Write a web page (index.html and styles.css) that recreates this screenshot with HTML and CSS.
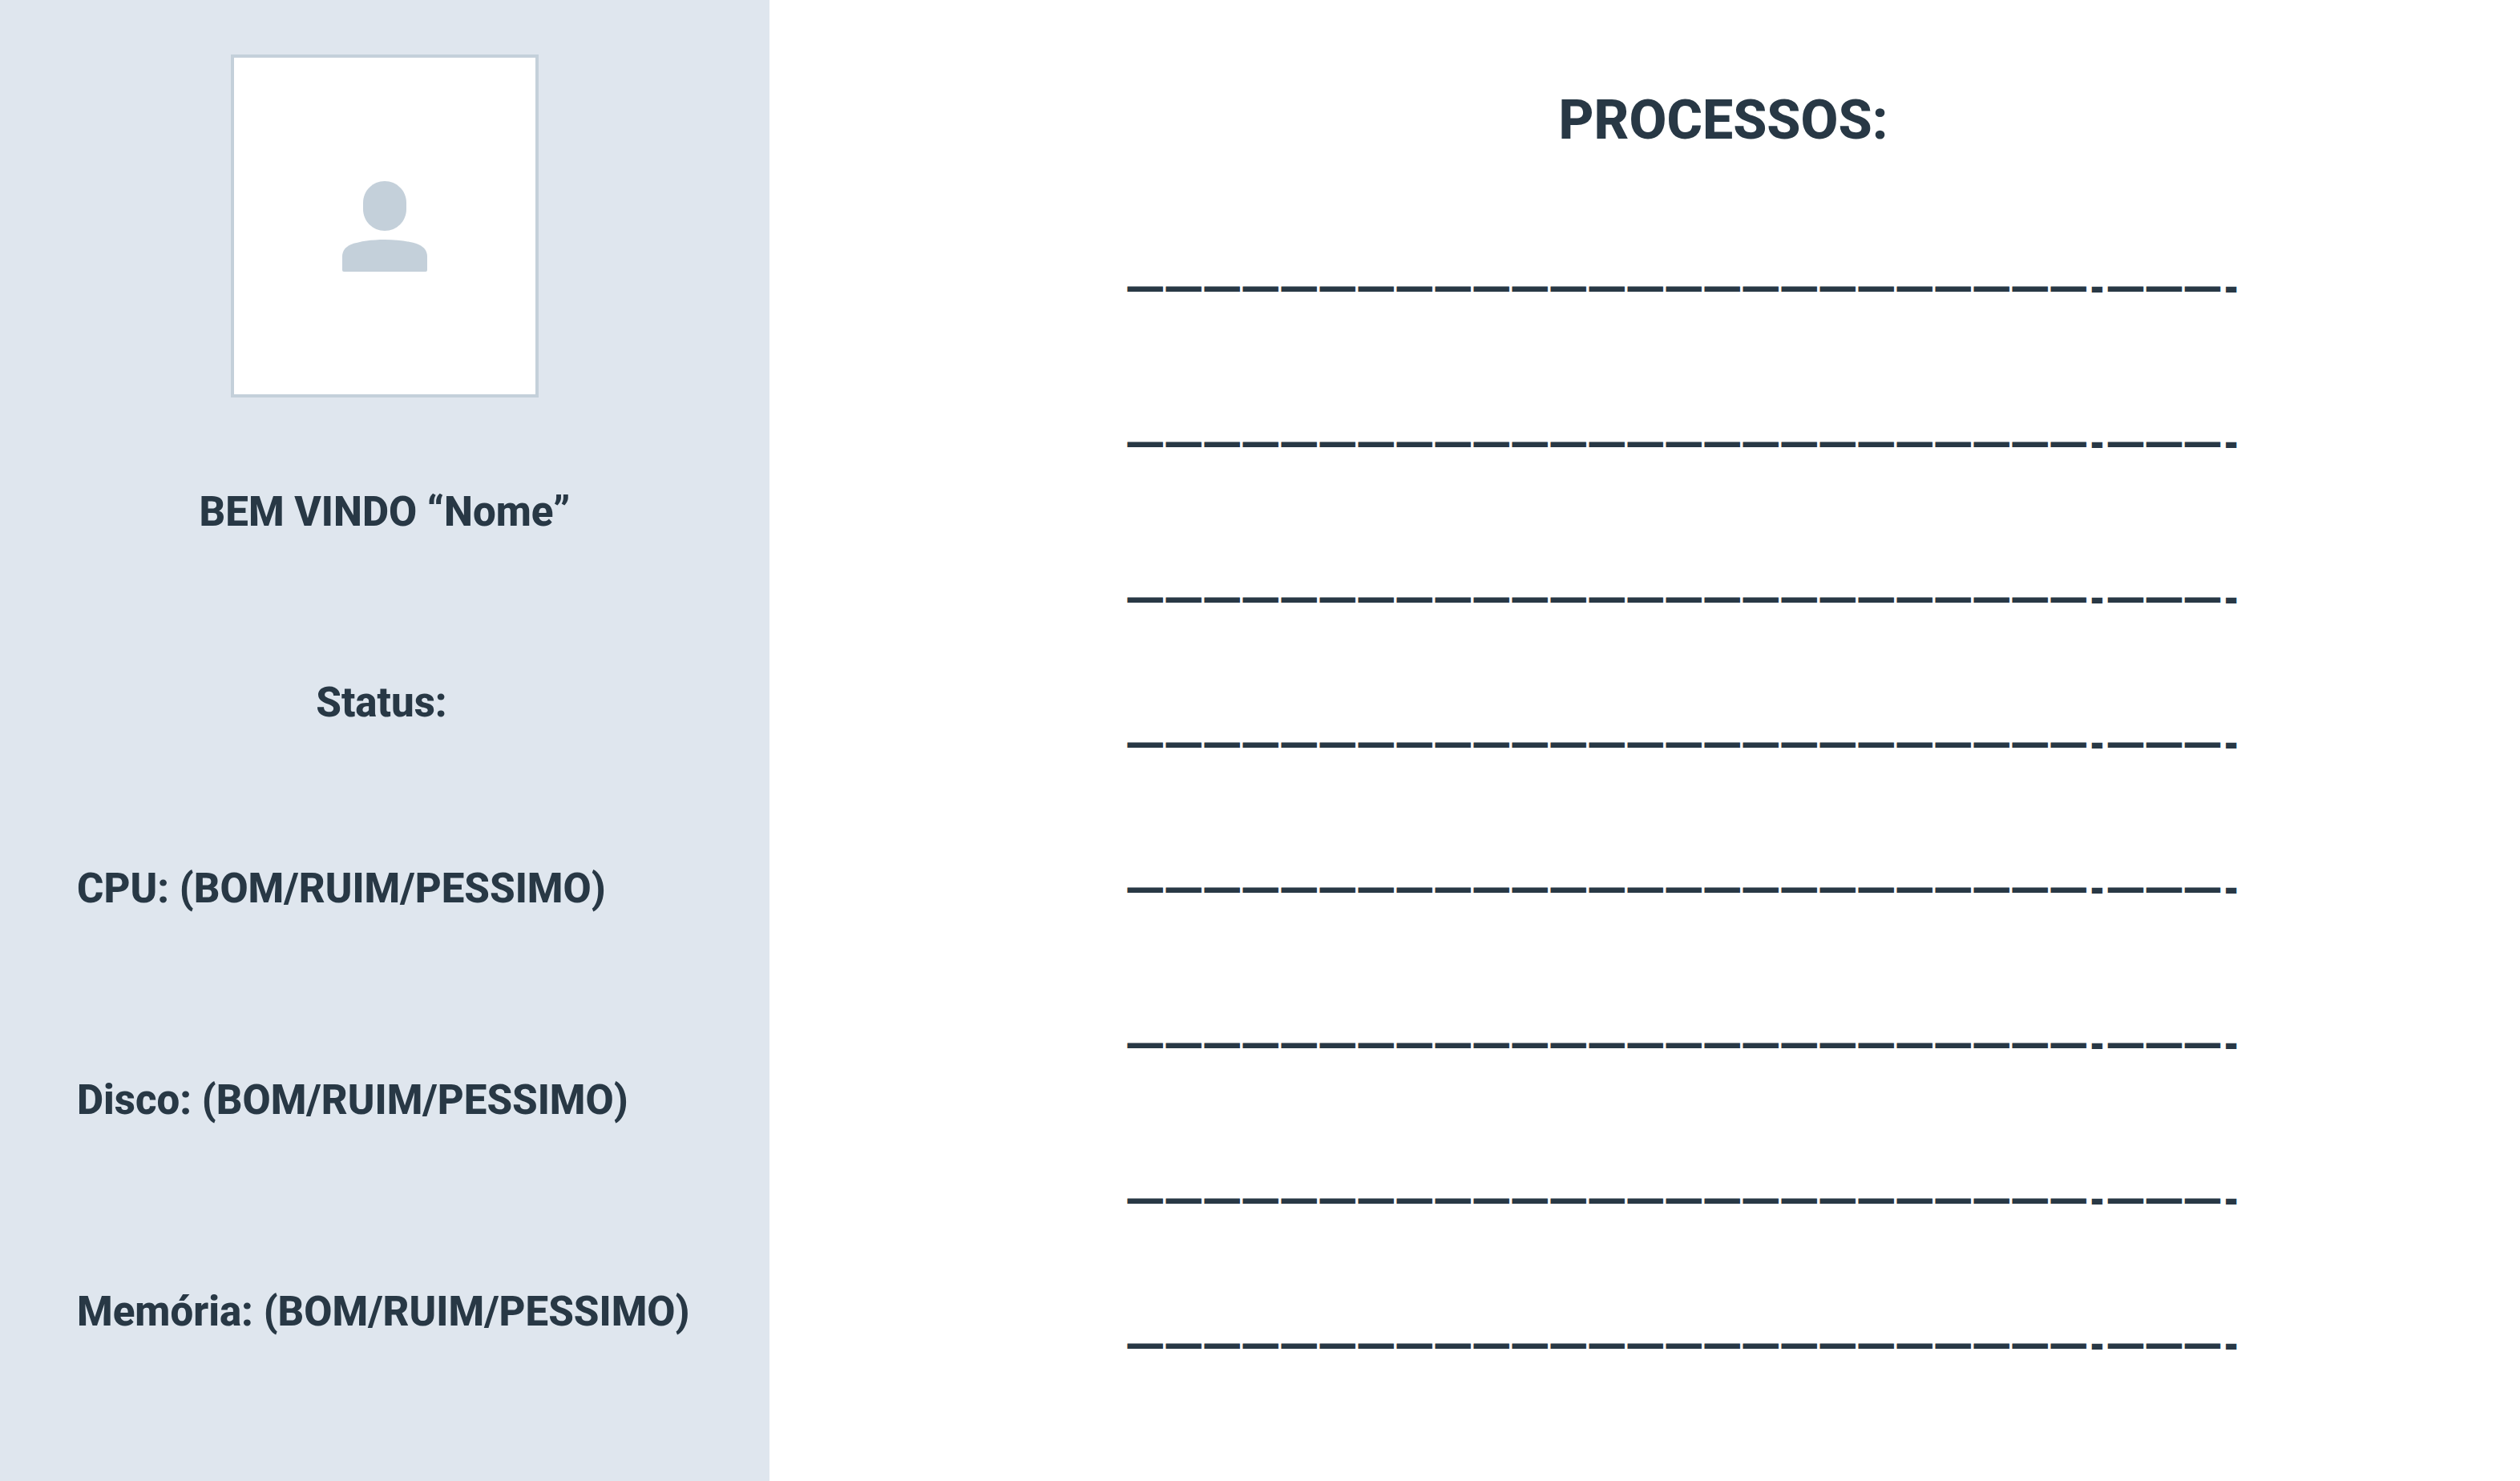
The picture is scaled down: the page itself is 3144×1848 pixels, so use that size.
FILE: index.html
```html
<!DOCTYPE html>
<html lang="pt-BR">
<head>
<meta charset="utf-8">
<meta name="viewport" content="width=device-width, initial-scale=1">
<title>Processos</title>
<link rel="stylesheet" href="styles.css">
</head>
<body>
<aside class="sidebar">
  <div class="avatar">
    <svg class="avatar-icon" viewBox="0 0 106 113" aria-hidden="true">
      <path d="M53 0C68 0 80 12 80 27V35C80 50 68 62 53 62S26 50 26 35V27C26 12 38 0 53 0Z"/>
      <path d="M0 94C0 87 4 82 11 79C22 75 37 73 53 73S84 75 95 79C102 82 106 87 106 94V111Q106 113 104 113H2Q0 113 0 111Z"/>
    </svg>
  </div>
  <p class="welcome">BEM VINDO “Nome”</p>
  <h2 class="status-title">Status:</h2>
  <ul class="metrics">
    <li>CPU: (BOM/RUIM/PESSIMO)</li>
    <li>Disco: (BOM/RUIM/PESSIMO)</li>
    <li>Memória: (BOM/RUIM/PESSIMO)</li>
  </ul>
</aside>
<main class="content">
  <h1 class="title">PROCESSOS:</h1>
  <ul class="processes">
    <li class="process"><span>—————————————————————————</span><span>-</span><span>———</span><span>-</span></li>
    <li class="process spaced"><span>—————————————————————————</span><span>-</span><span>———</span><span>-</span></li>
    <li class="process spaced"><span>—————————————————————————</span><span>-</span><span>———</span><span>-</span></li>
    <li class="process"><span>—————————————————————————</span><span>-</span><span>———</span><span>-</span></li>
    <li class="process"><span>—————————————————————————</span><span>-</span><span>———</span><span>-</span></li>
    <li class="process spaced"><span>—————————————————————————</span><span>-</span><span>———</span><span>-</span></li>
    <li class="process spaced"><span>—————————————————————————</span><span>-</span><span>———</span><span>-</span></li>
    <li class="process"><span>—————————————————————————</span><span>-</span><span>———</span><span>-</span></li>
  </ul>
</main>
</body>
</html>
```
FILE: styles.css
```css
* { box-sizing: border-box; }

body {
  margin: 0;
  min-height: 100vh;
  display: flex;
  background: #fff;
  color: #283845;
  font: 800 51px/62px Roboto, sans-serif;
}

h1, h2, p, ul {
  margin: 0;
  padding: 0;
  font-size: inherit;
  font-weight: inherit;
  list-style: none;
}

.sidebar {
  flex: 0 0 960px;
  padding: 68px 48px 48px 96px;
  background: #dfe6ee;
}

.avatar {
  display: flex;
  align-items: center;
  justify-content: center;
  width: 384px;
  height: 428px;
  margin: 0 auto 112px 192px;
  border: 4px solid #c4d0da;
  background: #fff;
}

.avatar-icon {
  width: 106px;
  height: 113px;
  fill: #c4d0da;
}

.welcome,
.status-title {
  padding-right: 48px;
  text-align: center;
}

.status-title {
  padding-right: 56px;
  margin: 176px 0 170px;
}

.metrics {
  display: grid;
  gap: 202px;
  white-space: nowrap;
}

.content {
  flex: 1;
  padding: 110px 0 48px 92px;
}

.title {
  padding-left: 104px;
  font-size: 68px;
  line-height: 80px;
  text-align: center;
}

.processes {
  display: grid;
  gap: 119px;
  margin-top: 135px;
  font: 900 48px/62px "Noto Sans", sans-serif;
}

.process {
  display: flex;
  justify-content: center;
  gap: 4px;
  white-space: nowrap;
}

.spaced {
  margin-top: 13px;
}
```
